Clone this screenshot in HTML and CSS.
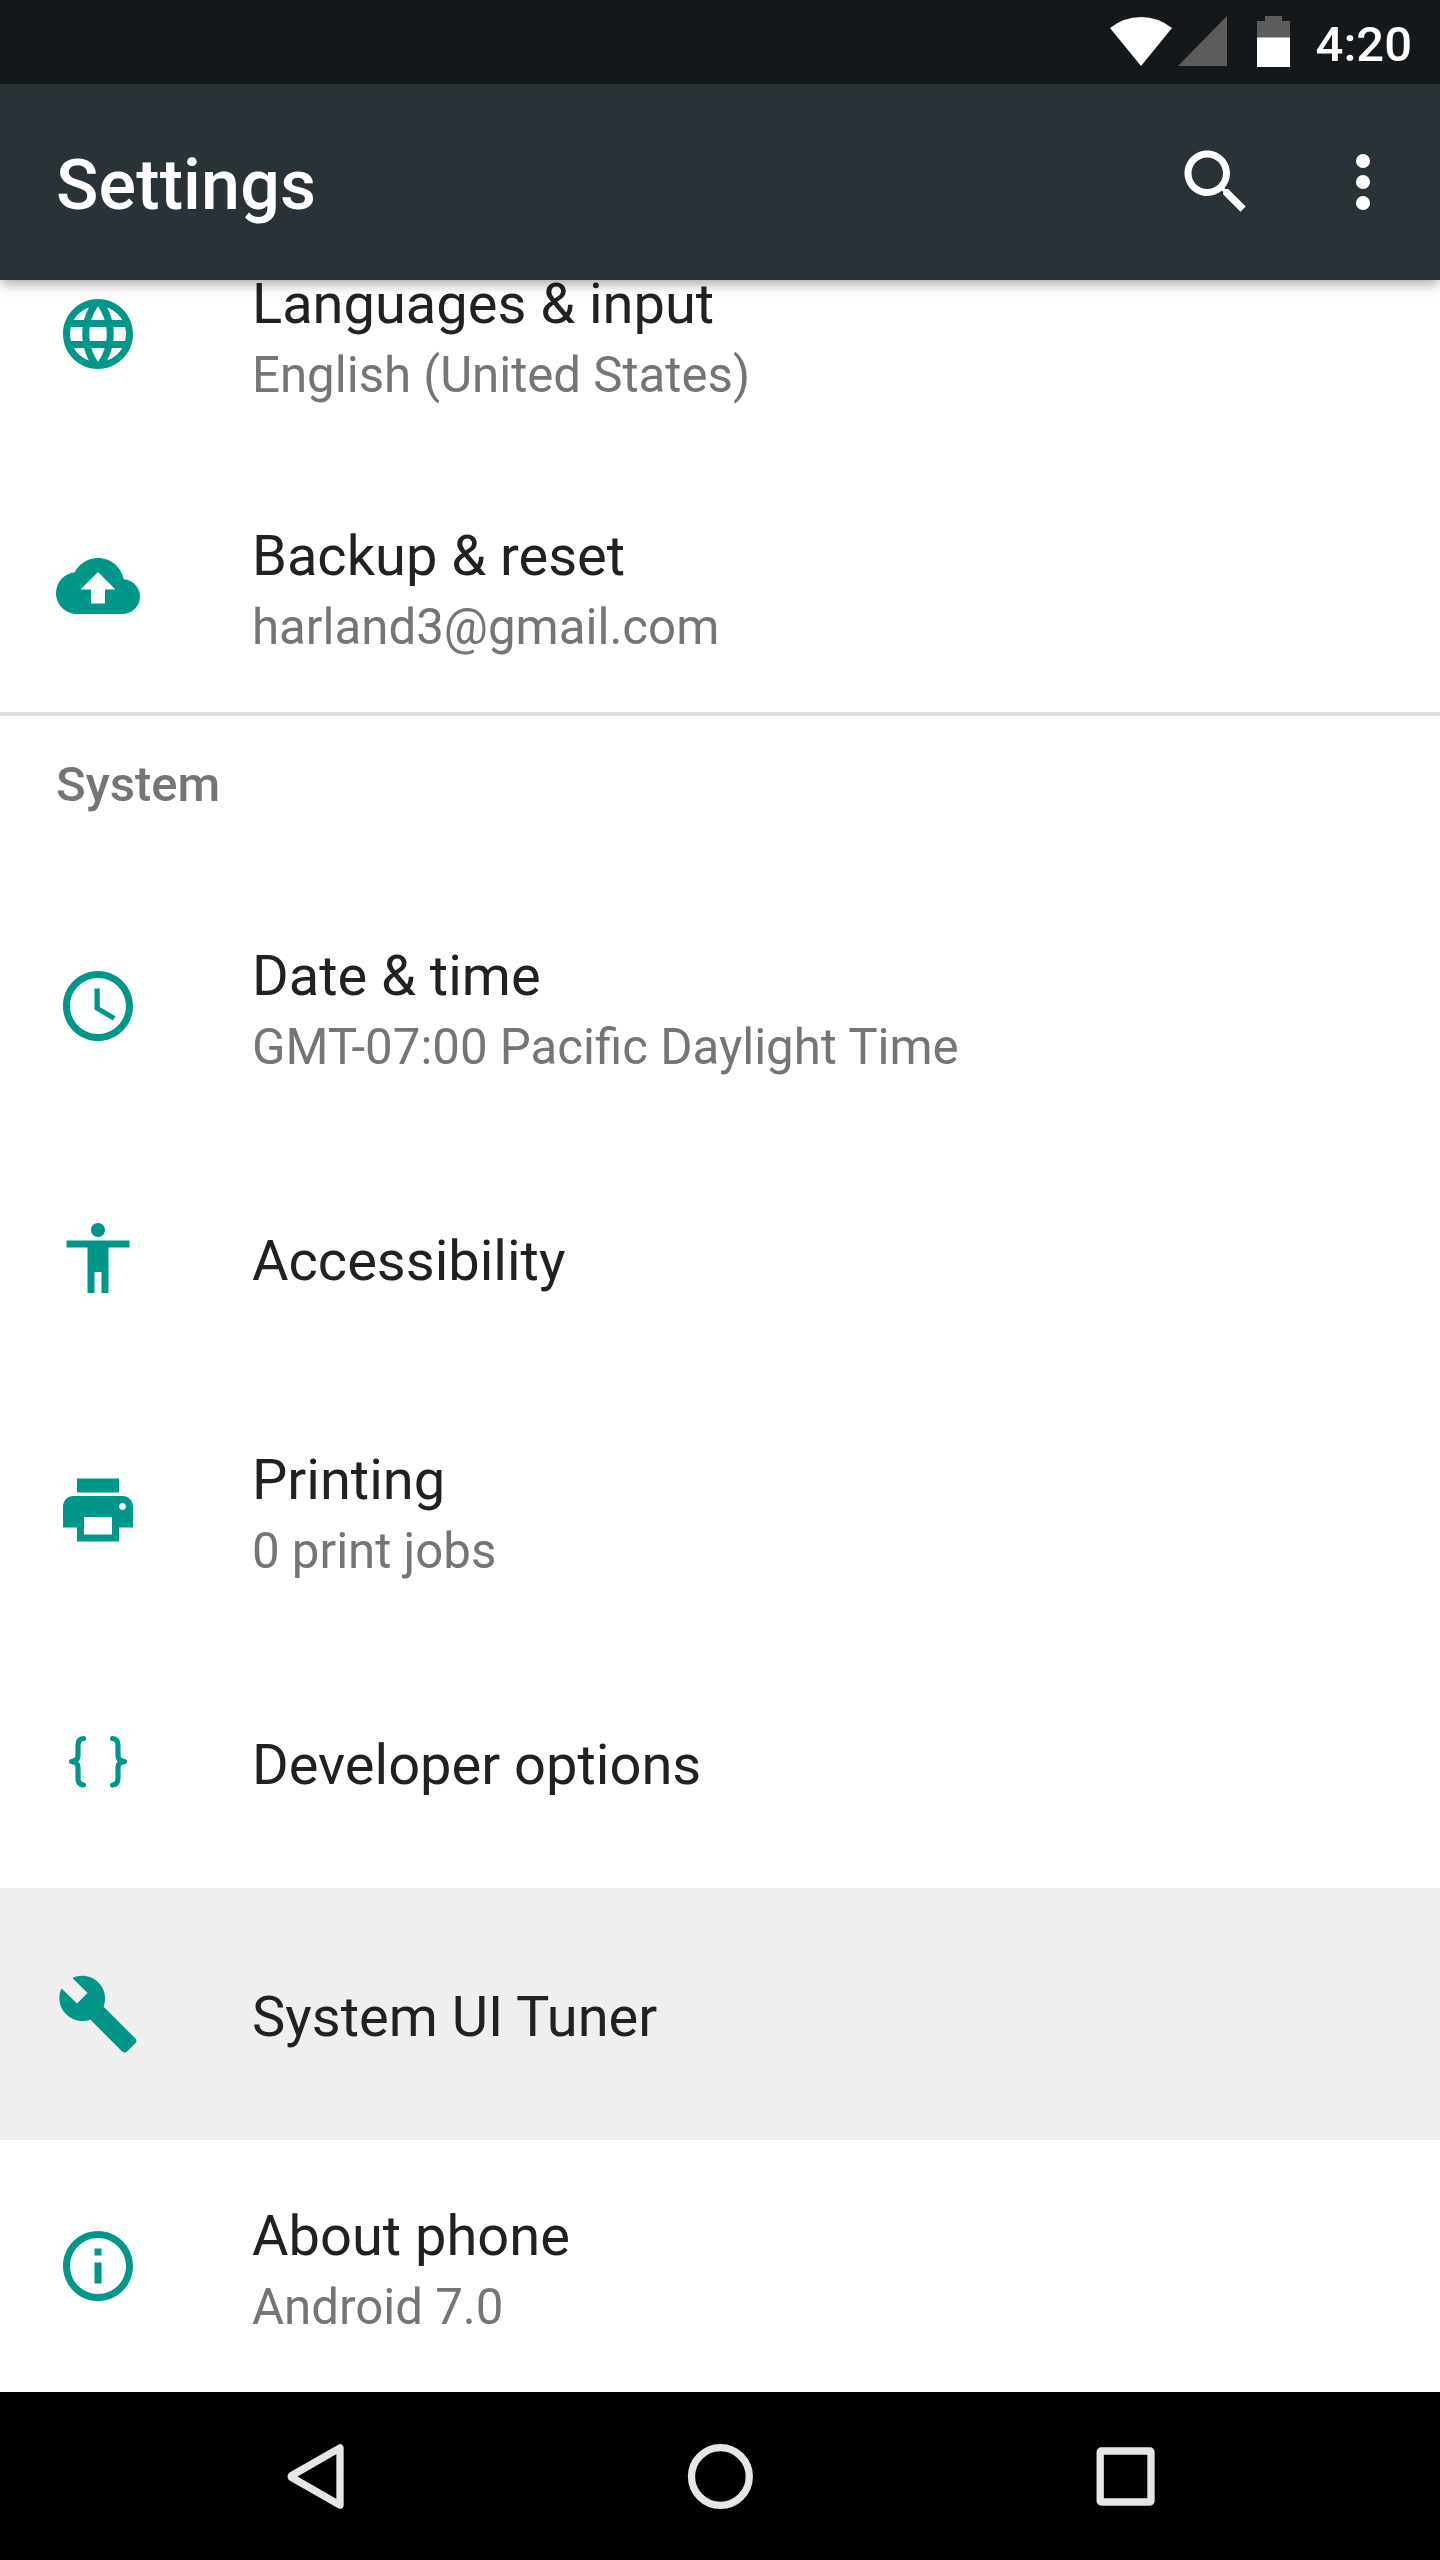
FILE: index.html
```html
<!DOCTYPE html>
<html lang="en">
<head>
<meta charset="utf-8">
<title>Settings</title>
<link rel="stylesheet" href="styles.css">
</head>
<body>
<div class="screen">
  <div class="status-bar">
    <svg class="status-icons" width="180" height="84" viewBox="0 0 180 84" aria-hidden="true">
      <path fill="#fff" d="M0 28Q14 17 31 17T62 28L31 66Z"/>
      <path fill="#5c5c5d" d="M68 66H117V16Z"/>
      <path fill="#5c5c5d" d="M155 16h17v5h8v17h-33V21h8z"/>
      <path fill="#fff" d="M147 37.500h33V67h-33z"/>
    </svg>
    <span class="clock">4:20</span>
  </div>

  <header class="app-bar">
    <h1 class="app-title">Settings</h1>
    <svg class="icon search" viewBox="0 0 24 24" aria-label="Search"><path d="M15.500 14h-.79l-.28-.27C15.410 12.590 16 11.110 16 9.500 16 5.910 13.090 3 9.500 3S3 5.910 3 9.500 5.910 16 9.500 16c1.610 0 3.090-.59 4.230-1.570l.27.280v.79l5 4.990L20.490 19l-4.990-5zm-6 0C7.010 14 5 11.990 5 9.500S7.010 5 9.500 5 14 7.010 14 9.500 11.990 14 9.500 14z"/></svg>
    <svg class="icon" viewBox="0 0 24 24" aria-label="More options"><circle cx="12" cy="6" r="2"/><circle cx="12" cy="12" r="2"/><circle cx="12" cy="18" r="2"/></svg>
  </header>

  <main class="content">
    <div class="list">
      <div class="row">
        <svg class="icon" viewBox="0 0 24 24"><path d="M11.990 2C6.470 2 2 6.480 2 12s4.470 10 9.990 10C17.520 22 22 17.520 22 12S17.520 2 11.990 2zm6.930 6h-2.950c-.32-1.250-.78-2.450-1.380-3.560 1.840.63 3.370 1.910 4.330 3.560zM12 4.040c.83 1.200 1.480 2.530 1.910 3.960h-3.820c.43-1.430 1.080-2.760 1.910-3.960zM4.260 14C4.100 13.360 4 12.690 4 12s.1-1.360.26-2h3.380c-.08.66-.14 1.320-.14 2s.06 1.340.14 2H4.260zm.82 2h2.950c.32 1.250.78 2.450 1.380 3.560-1.840-.63-3.370-1.900-4.330-3.560zm2.950-8H5.080c.96-1.660 2.490-2.930 4.330-3.560C8.810 5.550 8.350 6.750 8.030 8zM12 19.960c-.83-1.200-1.480-2.530-1.910-3.960h3.820c-.43 1.430-1.080 2.760-1.910 3.960zM14.340 14H9.660c-.09-.66-.16-1.320-.16-2s.07-1.350.16-2h4.680c.09.650.16 1.320.16 2s-.07 1.340-.16 2zm.25 5.560c.6-1.110 1.060-2.310 1.380-3.560h2.950c-.96 1.650-2.490 2.930-4.330 3.560zM16.360 14c.08-.66.14-1.320.14-2s-.06-1.340-.14-2h3.380c.16.640.26 1.310.26 2s-.1 1.360-.26 2h-3.380z"/></svg>
        <div class="text"><div class="title">Languages &amp; input</div><div class="summary">English (United States)</div></div>
      </div>
      <div class="row">
        <svg class="icon" viewBox="0 0 24 24"><path d="M19.350 10.040C18.670 6.590 15.640 4 12 4 9.110 4 6.600 5.640 5.350 8.040 2.340 8.360 0 10.910 0 14c0 3.310 2.690 6 6 6h13c2.760 0 5-2.240 5-5 0-2.640-2.050-4.780-4.650-4.960zM14 13v4h-4v-4H7l5-5 5 5h-3z"/></svg>
        <div class="text"><div class="title">Backup &amp; reset</div><div class="summary">harland3@gmail.com</div></div>
      </div>

      <h2 class="section">System</h2>

      <div class="row">
        <svg class="icon" viewBox="0 0 24 24"><path d="M11.990 2C6.470 2 2 6.480 2 12s4.470 10 9.990 10C17.520 22 22 17.520 22 12S17.520 2 11.990 2zM12 20c-4.420 0-8-3.580-8-8s3.580-8 8-8 8 3.580 8 8-3.580 8-8 8zM12.500 7H11v6l5.250 3.150.75-1.230-4.500-2.670z"/></svg>
        <div class="text"><div class="title">Date &amp; time</div><div class="summary">GMT-07:00 Pacific Daylight Time</div></div>
      </div>
      <div class="row">
        <svg class="icon" viewBox="0 0 24 24"><path d="M12 2c1.100 0 2 .9 2 2s-.9 2-2 2-2-.9-2-2 .9-2 2-2zm9 7h-6v13h-2v-6h-2v6H9V9H3V7h18v2z"/></svg>
        <div class="text"><div class="title">Accessibility</div></div>
      </div>
      <div class="row">
        <svg class="icon" viewBox="0 0 24 24"><path d="M19 8H5c-1.660 0-3 1.340-3 3v6h4v4h12v-4h4v-6c0-1.660-1.340-3-3-3zm-3 11H8v-5h8v5zm3-7c-.55 0-1-.45-1-1s.45-1 1-1 1 .45 1 1-.45 1-1 1zm-1-9H6v4h12V3z"/></svg>
        <div class="text"><div class="title">Printing</div><div class="summary">0 print jobs</div></div>
      </div>
      <div class="row">
        <svg class="icon braces" viewBox="0 0 84 84"><path d="M27.500 18.500Q22 19 22 25V36Q22 40.500 15.500 41.500Q22 42.500 22 47V58.500Q22 64.500 27.500 65M56.500 18.500Q62 19 62 25V36Q62 40.500 68.500 41.500Q62 42.500 62 47V58.500Q62 64.500 56.500 65"/></svg>
        <div class="text"><div class="title">Developer options</div></div>
      </div>
      <div class="row pressed">
        <svg class="icon" viewBox="0 0 24 24"><path d="M22.700 19l-9.100-9.100c.9-2.300.4-5-1.500-6.900-2-2-5-2.400-7.400-1.300L9 6 6 9 1.600 4.700C.4 7.100.9 10.100 2.900 12.100c1.900 1.900 4.600 2.400 6.900 1.500l9.100 9.100c.4.400 1 .4 1.400 0l2.300-2.300c.5-.4.5-1.100.1-1.400z"/></svg>
        <div class="text"><div class="title">System UI Tuner</div></div>
      </div>
      <div class="row">
        <svg class="icon" viewBox="0 0 24 24"><path d="M11 17h2v-6h-2v6zm1-15C6.480 2 2 6.480 2 12s4.480 10 10 10 10-4.480 10-10S17.520 2 12 2zm0 18c-4.410 0-8-3.590-8-8s3.590-8 8-8 8 3.590 8 8-3.590 8-8 8zM11 9h2V7h-2v2z"/></svg>
        <div class="text"><div class="title">About phone</div><div class="summary">Android 7.0</div></div>
      </div>
    </div>
  </main>

  <nav class="nav-bar">
    <svg class="nav-icon" viewBox="0 0 84 84" aria-label="Back"><path d="M67 13.800V71.200L18.800 43.500Q17.500 42.500 18.800 41.500Z"/></svg>
    <svg class="nav-icon" viewBox="0 0 84 84" aria-label="Home"><circle cx="42.400" cy="42.500" r="28.900"/></svg>
    <svg class="nav-icon" viewBox="0 0 84 84" aria-label="Overview"><rect x="17.200" y="17" width="50.800" height="51" rx="1"/></svg>
  </nav>
</div>
</body>
</html>
```
FILE: styles.css
```css
* {
  box-sizing: border-box;
}

body {
  margin: 0;
  background: #fff;
  font-family: Roboto, sans-serif;
}

.screen {
  display: flex;
  flex-direction: column;
  width: 1440px;
  height: 2560px;
  overflow: hidden;
}

.status-bar {
  display: flex;
  flex: none;
  align-items: center;
  justify-content: flex-end;
  gap: 26px;
  height: 84px;
  padding-right: 28px;
  background: #14181b;
  color: #fff;
}

.clock {
  padding-top: 6px;
  font-size: 49px;
  font-weight: 500;
  line-height: 58px;
}

.app-bar {
  display: flex;
  flex: none;
  align-items: center;
  z-index: 1;
  height: 196px;
  padding: 0 35px 0 56px;
  background: #283237;
  box-shadow: 0 5px 12px -1px rgba(0, 0, 0, 0.35);
  color: #fff;
}

.app-title {
  flex: 1;
  margin: 0;
  padding-top: 6px;
  font-size: 70px;
  font-weight: 500;
  letter-spacing: 0.15px;
  line-height: 82px;
}

.icon {
  flex: none;
  width: 84px;
  height: 84px;
  fill: currentColor;
}

.search {
  margin-right: 63px;
}

.content {
  flex: 1;
  min-height: 0;
  overflow: hidden;
}

/* The list is scrolled partway under the app bar. */
.list {
  margin-top: -72px;
}

.row {
  display: flex;
  align-items: center;
  gap: 112px;
  height: 252px;
  padding: 0 56px;
  color: #009688;
}

.pressed {
  background: #efefef;
}

.text {
  padding-top: 6px;
}

.title {
  color: #212121;
  font-size: 56px;
  line-height: 74px;
}

.summary {
  margin-bottom: -1px;
  padding-top: 2px;
  color: #757575;
  font-size: 49.2px;
  line-height: 65px;
}

.section {
  display: flex;
  align-items: center;
  height: 168px;
  margin: 0;
  padding: 0 56px 28px;
  border-top: 4px solid #dedede;
  color: #757575;
  font-size: 49px;
  font-weight: 500;
}

.braces {
  fill: none;
  stroke: currentColor;
  stroke-width: 5.2;
  stroke-linecap: round;
  stroke-linejoin: round;
}

.nav-bar {
  display: flex;
  flex: none;
  align-items: center;
  justify-content: center;
  gap: 321px;
  height: 168px;
  background: #000;
}

.nav-icon {
  width: 84px;
  height: 84px;
  fill: none;
  stroke: #e6e6e6;
  stroke-width: 7.3;
  stroke-linejoin: round;
}
```
